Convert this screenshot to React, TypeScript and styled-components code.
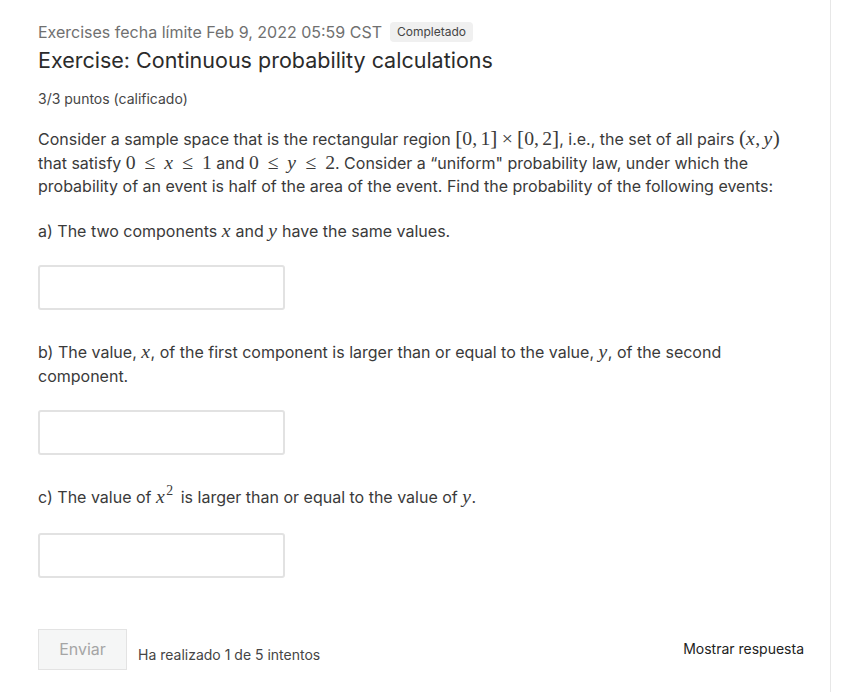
import React from "react";
import styled, { createGlobalStyle } from "styled-components";

const Global = createGlobalStyle`
  html, body { margin: 0; padding: 0; background: #fff; }
  body { font-family: Inter, "Noto Sans", sans-serif; color: #454545; }
`;

const Page = styled.div`
  display: flex;
  min-height: 692px;
`;

const Main = styled.main`
  width: 831px;
  box-sizing: border-box;
  border-right: 1px solid #e7e7e7;
  padding: 20px 26px 20px 38px;
`;

const MetaRow = styled.div`
  display: flex;
  align-items: center;
  gap: 8px;
  font-size: 16px;
  color: #707070;
  line-height: 24px;
`;

const Badge = styled.span`
  background: #f0f0f0;
  border-radius: 4px;
  font-size: 12px;
  color: #454545;
  padding: 2px 7px;
  line-height: 16px;
`;

const Title = styled.h1`
  margin: 0;
  font-size: 21.5px;
  font-weight: 400;
  color: #2b2b2b;
  line-height: 32px;
`;

const Points = styled.div`
  margin-top: 13px;
  font-size: 14px;
  color: #454545;
  line-height: 20px;
`;

const Body = styled.div`
  margin-top: 19px;
  max-width: 752px;
  font-size: 16px;
  line-height: 23.5px;
  color: #3a3a3a;
`;

const Para = styled.p<{ gap?: number }>`
  margin: 0 0 ${(p) => p.gap ?? 21}px 0;
`;

/* inline math run */
const M = styled.span`
  font-family: "Liberation Serif", "DejaVu Serif", serif;
  font-size: 1.23em;
  line-height: 1;
  white-space: nowrap;
`;

/* math variable */
const V = styled.i`
  font-style: italic;
  padding-right: 0.03em;
`;

/* relation / binary operator with KaTeX-like spacing */
const Op = styled.span<{ rel?: boolean }>`
  margin: 0 ${(p) => (p.rel ? "0.45em" : "0.22em")};
`;

/* punctuation comma inside math */
const Comma = styled.span`
  margin-right: 0.17em;
`;

const Br = styled.span`
  font-size: 1.08em;
`;

const Sup = styled.sup`
  font-size: 0.7em;
  line-height: 0;
  margin-left: 1px;
  margin-right: 3px;
  vertical-align: 0.55em;
`;

const AnswerInput = styled.input<{ after: number }>`
  display: block;
  width: 247px;
  height: 45px;
  box-sizing: border-box;
  border: 2px solid #e2e2e2;
  border-radius: 3px;
  background: #fff;
  margin: 0 0 ${(p) => p.after}px 0;
  outline: none;
`;

const Footer = styled.div`
  display: flex;
  align-items: center;
  margin-top: 51px;
`;

const Submit = styled.button`
  width: 89px;
  height: 41px;
  background: #f5f6f6;
  border: 1px solid #e3e3e3;
  border-radius: 0;
  color: #a5a5a5;
  font-family: Inter, sans-serif;
  font-size: 16px;
  padding: 0;
`;

const Attempts = styled.span`
  margin-left: 11px;
  margin-top: 10px;
  font-size: 14px;
  color: #454545;
`;

const ShowAnswer = styled.button`
  margin-left: auto;
  background: none;
  border: none;
  padding: 0;
  font-family: Inter, sans-serif;
  font-size: 14px;
  color: #222;
  margin-bottom: 2px;
`;

export default function App() {
  return (
    <>
      <Global />
      <Page>
        <Main>
          <MetaRow>
            <span>Exercises fecha límite Feb 9, 2022 05:59 CST</span>
            <Badge>Completado</Badge>
          </MetaRow>
          <Title>Exercise: Continuous probability calculations</Title>
          <Points>3/3 puntos (calificado)</Points>
          <Body>
            <Para>
              Consider a sample space that is the rectangular region{" "}
              <M>
                <Br>[</Br>0<Comma>,</Comma>1<Br>]</Br>
                <Op>×</Op>
                <Br>[</Br>0<Comma>,</Comma>2<Br>]</Br>
              </M>
              , i.e., the set of all pairs{" "}
              <M>
                <Br>(</Br>
                <V>x</V>
                <Comma>,</Comma>
                <V>y</V>
                <Br>)</Br>
              </M>{" "}
              that satisfy{" "}
              <M>
                0<Op rel>≤</Op>
                <V>x</V>
                <Op rel>≤</Op>1
              </M>{" "}
              and{" "}
              <M>
                0<Op rel>≤</Op>
                <V>y</V>
                <Op rel>≤</Op>2
              </M>
              . Consider a “uniform" probability law, under which the probability of an event is half of the area of the
              event. Find the probability of the following events:
            </Para>
            <Para gap={22}>
              a) The two components{" "}
              <M>
                <V>x</V>
              </M>{" "}
              and{" "}
              <M>
                <V>y</V>
              </M>{" "}
              have the same values.
            </Para>
            <AnswerInput after={31} aria-label="a" />
            <Para gap={22}>
              b) The value,{" "}
              <M>
                <V>x</V>
              </M>
              , of the first component is larger than or equal to the value,{" "}
              <M>
                <V>y</V>
              </M>
              , of the second component.
            </Para>
            <AnswerInput after={31} aria-label="b" />
            <Para gap={23}>
              c) The value of{" "}
              <M>
                <V>x</V>
                <Sup>2</Sup>
              </M>{" "}
              is larger than or equal to the value of{" "}
              <M>
                <V>y</V>
              </M>
              .
            </Para>
            <AnswerInput after={0} aria-label="c" />
          </Body>
          <Footer>
            <Submit>Enviar</Submit>
            <Attempts>Ha realizado 1 de 5 intentos</Attempts>
            <ShowAnswer>Mostrar respuesta</ShowAnswer>
          </Footer>
        </Main>
      </Page>
    </>
  );
}
